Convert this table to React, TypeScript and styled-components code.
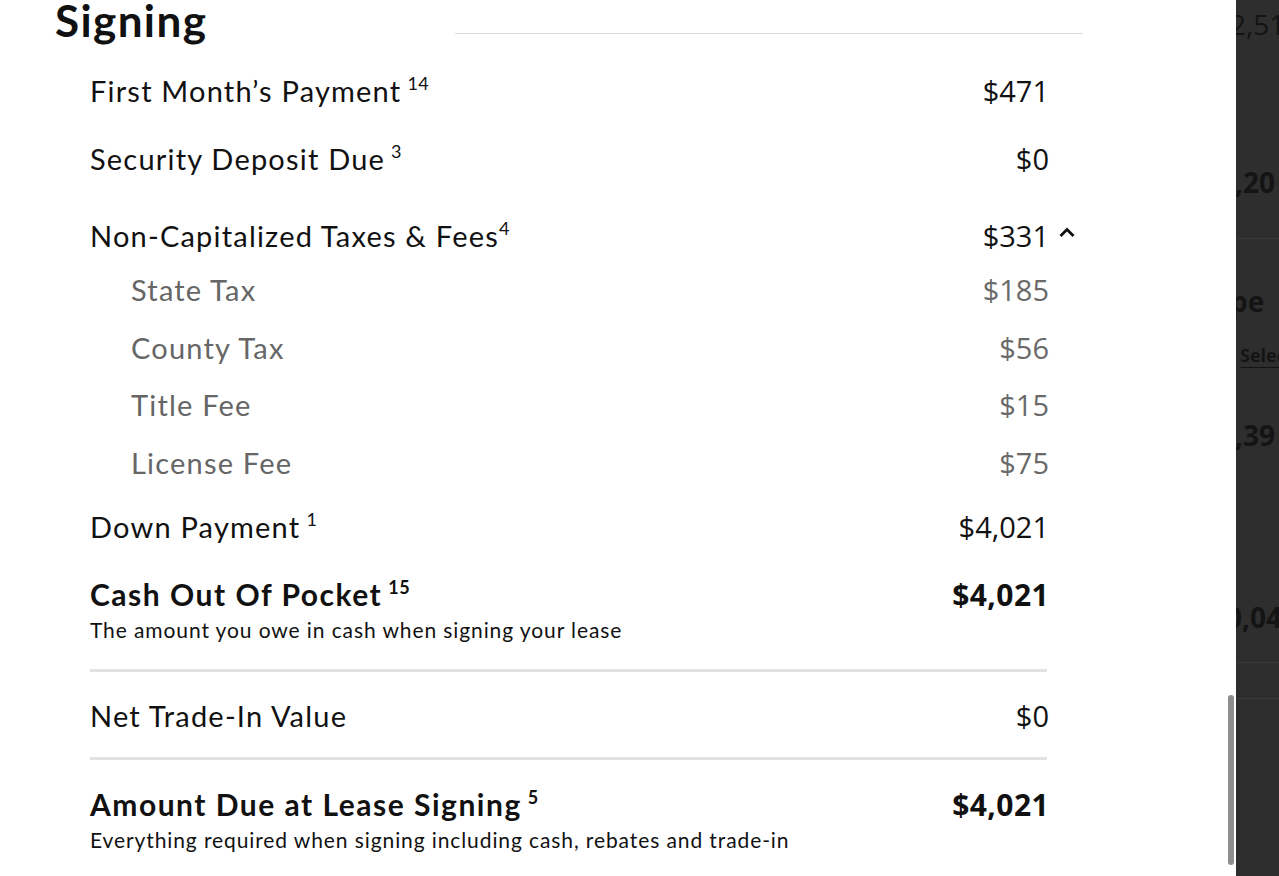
import React from 'react';
import styled, { createGlobalStyle } from 'styled-components';

const GlobalStyle = createGlobalStyle`
  html, body {
    margin: 0;
    padding: 0;
    height: 100%;
    overflow: hidden;
    background: #fff;
  }
  * {
    box-sizing: border-box;
  }
`;

const Page = styled.div`
  display: flex;
  width: 1279px;
  height: 876px;
  overflow: hidden;
`;

const Panel = styled.div`
  position: relative;
  width: 1236px;
  height: 100%;
  background: #fff;
  font-family: Lato, 'Noto Sans', sans-serif;
  color: #111;
  overflow: hidden;
`;

const HeadingRow = styled.div`
  display: flex;
  align-items: flex-start;
  padding-left: 55px;
  height: 48px;
`;

const Heading = styled.h2`
  margin: 0;
  font-size: 44px;
  line-height: 40px;
  font-weight: 700;
  letter-spacing: 1.4px;
`;

const HeadingRule = styled.div`
  margin-top: 33px;
  margin-left: 248px;
  width: 628px;
  height: 1px;
  background: #dcdcdc;
`;

const List = styled.div`
  width: 1049px;
  padding-left: 90px;
`;

const Row = styled.div<{ $top: number; $indent?: boolean }>`
  display: flex;
  justify-content: space-between;
  align-items: center;
  margin-top: ${(p) => p.$top}px;
  padding-left: ${(p) => (p.$indent ? 41 : 0)}px;
  height: 40px;
`;

const Label = styled.span<{ $muted?: boolean; $bold?: boolean }>`
  font-size: ${(p) => (p.$bold ? 30 : 29)}px;
  letter-spacing: ${(p) => (p.$bold ? 1.5 : 1.2)}px;
  font-weight: ${(p) => (p.$bold ? 700 : 400)};
  color: ${(p) => (p.$muted ? '#666' : '#111')};
  white-space: nowrap;
`;

const Sup = styled.sup<{ $tight?: boolean }>`
  font-size: 18px;
  letter-spacing: 0.5px;
  margin-left: ${(p) => (p.$tight ? 0 : 6)}px;
  vertical-align: 12px;
  line-height: 0;
`;

const Value = styled.span<{ $muted?: boolean; $bold?: boolean }>`
  position: relative;
  font-family: 'Open Sans', 'Noto Sans', sans-serif;
  font-size: ${(p) => (p.$bold ? 30 : 29)}px;
  letter-spacing: ${(p) => (p.$bold ? 0.4 : 0)}px;
  font-weight: ${(p) => (p.$bold ? 700 : 400)};
  color: ${(p) => (p.$muted ? '#6a6a6a' : '#111')};
  white-space: nowrap;
`;

const Chevron = styled.svg`
  position: absolute;
  left: calc(100% + 8px);
  top: 9px;
`;

const Note = styled.div`
  font-size: 21px;
  letter-spacing: 0.9px;
  line-height: 24px;
  margin-top: 4px;
  color: #111;
`;

const Divider = styled.div<{ $top: number }>`
  margin-top: ${(p) => p.$top}px;
  width: 957px;
  height: 3px;
  background: #e2e2e2;
`;

const ScrollThumb = styled.div`
  position: absolute;
  right: 2px;
  top: 695px;
  width: 6px;
  height: 170px;
  border-radius: 3px;
  background: #8e8e8e;
`;

const Backdrop = styled.div`
  flex: 1;
  height: 100%;
  background: #2e2e2e;
  overflow: hidden;
  font-family: 'Open Sans', 'Noto Sans', sans-serif;
  color: #141414;
`;

const Ghost = styled.div<{ $top: number; $shift: number; $bold?: boolean; $size?: number }>`
  margin-top: ${(p) => p.$top}px;
  margin-left: ${(p) => p.$shift}px;
  font-size: ${(p) => p.$size ?? 28}px;
  line-height: 36px;
  font-weight: ${(p) => (p.$bold ? 700 : 400)};
  white-space: nowrap;
`;

const GhostLink = styled.span`
  font-size: 18px;
  font-weight: 700;
  text-decoration: underline;
  text-underline-offset: 5px;
`;

const GhostRule = styled.div<{ $top: number }>`
  margin-top: ${(p) => p.$top}px;
  height: 1px;
  background: #3a3a3a;
`;

type Item = {
  label: string;
  sup?: string;
  tight?: boolean;
  value: string;
  top: number;
  sub?: boolean;
  open?: boolean;
};

const items: Item[] = [
  { label: 'First Month\u2019s Payment', sup: '14', value: '$471', top: 22 },
  { label: 'Security Deposit Due', sup: '3', value: '$0', top: 28 },
  { label: 'Non-Capitalized Taxes & Fees', sup: '4', tight: true, value: '$331', top: 37, open: true },
  { label: 'State Tax', value: '$185', top: 14, sub: true },
  { label: 'County Tax', value: '$56', top: 18, sub: true },
  { label: 'Title Fee', value: '$15', top: 17, sub: true },
  { label: 'License Fee', value: '$75', top: 18, sub: true },
  { label: 'Down Payment', sup: '1', value: '$4,021', top: 24 },
];

const App: React.FC = () => {
  return (
    <Page>
      <GlobalStyle />
      <Panel>
        <HeadingRow>
          <Heading>Signing</Heading>
          <HeadingRule />
        </HeadingRow>
        <List>
          {items.map((it) => (
            <Row key={it.label} $top={it.top} $indent={it.sub}>
              <Label $muted={it.sub}>
                {it.label}
                {it.sup && <Sup $tight={it.tight}>{it.sup}</Sup>}
              </Label>
              <Value $muted={it.sub}>
                {it.value}
                {it.open && (
                  <Chevron width="20" height="14" viewBox="0 0 20 14">
                    <path d="M3.5 11 L10 4.5 L16.5 11" fill="none" stroke="#111" strokeWidth="2.8" />
                  </Chevron>
                )}
              </Value>
            </Row>
          ))}

          <Row $top={28}>
            <Label $bold>
              Cash Out Of Pocket<Sup>15</Sup>
            </Label>
            <Value $bold>$4,021</Value>
          </Row>
          <Note>The amount you owe in cash when signing your lease</Note>

          <Divider $top={27} />
          <Row $top={23}>
            <Label>Net Trade-In Value</Label>
            <Value>$0</Value>
          </Row>
          <Divider $top={22} />

          <Row $top={24}>
            <Label $bold>
              Amount Due at Lease Signing<Sup>5</Sup>
            </Label>
            <Value $bold>$4,021</Value>
          </Row>
          <Note>Everything required when signing including cash, rebates and trade-in</Note>
        </List>
        <ScrollThumb />
      </Panel>

      <Backdrop>
        <Ghost $top={6} $shift={-6}>2,51</Ghost>
        <Ghost $top={122} $shift={-1} $bold>,20</Ghost>
        <GhostRule $top={38} />
        <Ghost $top={44} $shift={-6} $bold>pe</Ghost>
        <Ghost $top={14} $shift={4}>
          <GhostLink>Select</GhostLink>
        </Ghost>
        <Ghost $top={44} $shift={-1} $bold>,39</Ghost>
        <Ghost $top={146} $shift={-10} $bold>0,04</Ghost>
        <GhostRule $top={27} />
        <GhostRule $top={35} />
      </Backdrop>
    </Page>
  );
};

export default App;
